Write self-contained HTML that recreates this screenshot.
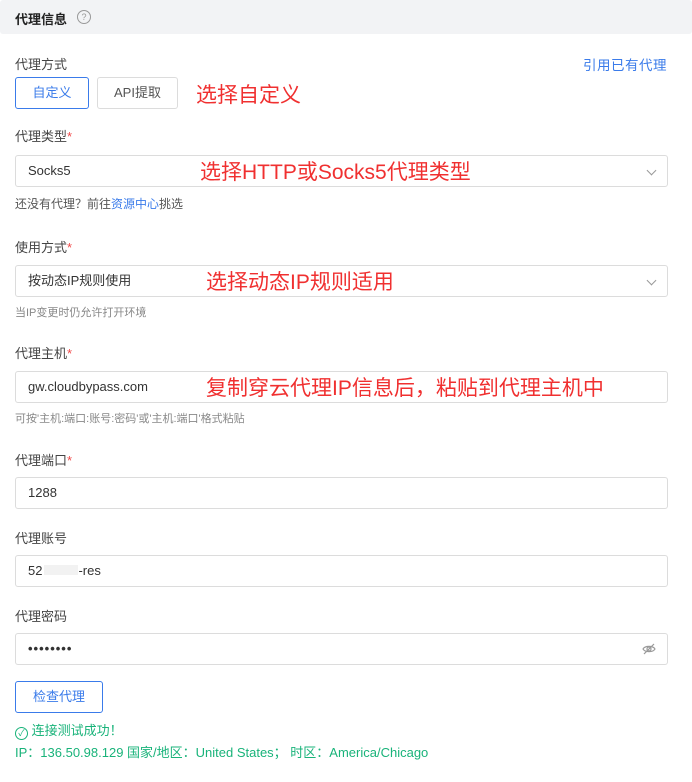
<!DOCTYPE html><html><head><meta charset="utf-8"><style>
body{margin:0;width:692px;height:782px;background:#fff;font-family:"Liberation Sans","Noto Sans CJK SC",sans-serif;position:relative;overflow:hidden;color:#333}
.a{position:absolute;white-space:nowrap}
.hd{position:absolute;left:0;top:0;width:692px;height:34px;background:#f2f3f5;border-radius:3px}
.lb{font-size:13px;color:#444}
.st{color:#f04848}
.in{position:absolute;left:15px;width:651px;height:30px;border:1px solid #dcdcdc;border-radius:3px;font-size:13px;line-height:30px;box-sizing:content-box}
.in span{margin-left:12px;color:#333}
.hint{font-size:11px;color:#888}
.red{color:#f03030;font-size:21px}
.arr{position:absolute;right:12px;top:11px;width:6px;height:6px;border-right:1px solid #999;border-bottom:1px solid #999;transform:rotate(45deg)}
</style></head><body>
<div class="hd"></div>
<div class="a" style="left:15px;top:9px;font-size:13px;font-weight:bold;color:#222">代理信息</div>
<div class="a" style="left:77px;top:10px;width:12px;height:12px;border:1px solid #999;border-radius:50%;font-size:9px;line-height:12px;text-align:center;color:#999">?</div>
<div class="a lb" style="left:15px;top:54px">代理方式</div>
<div class="a" style="left:583px;top:54px;font-size:13.5px;color:#3a7bea;letter-spacing:0.5px">引用已有代理</div>
<div class="a" style="left:15px;top:77px;width:72px;height:30px;border:1px solid #3a7bea;border-radius:3px;color:#3a7bea;font-size:13px;line-height:30px;text-align:center">自定义</div>
<div class="a" style="left:97px;top:77px;width:79px;height:30px;border:1px solid #dcdcdc;border-radius:3px;color:#555;font-size:13px;line-height:30px;text-align:center">API提取</div>
<div class="a red" style="left:196px;top:79px">选择自定义</div>
<div class="a lb" style="left:15px;top:126px">代理类型<span class="st">*</span></div>
<div class="in" style="top:155px"><span>Socks5</span><i class="arr"></i></div>
<div class="a red" style="left:200px;top:156px">选择HTTP或Socks5代理类型</div>
<div class="a" style="left:15px;top:195px;font-size:12px;color:#555">还没有代理？前往<span style="color:#3a7bea">资源中心</span>挑选</div>
<div class="a lb" style="left:15px;top:237px">使用方式<span class="st">*</span></div>
<div class="in" style="top:265px"><span>按动态IP规则使用</span><i class="arr"></i></div>
<div class="a red" style="left:206px;top:266px">选择动态IP规则适用</div>
<div class="a hint" style="left:15px;top:304px">当IP变更时仍允许打开环境</div>
<div class="a lb" style="left:15px;top:343px">代理主机<span class="st">*</span></div>
<div class="in" style="top:371px"><span>gw.cloudbypass.com</span></div>
<div class="a red" style="left:206px;top:372px">复制穿云代理IP信息后，粘贴到代理主机中</div>
<div class="a hint" style="left:15px;top:410px">可按'主机:端口:账号:密码'或'主机:端口'格式粘贴</div>
<div class="a lb" style="left:15px;top:450px">代理端口<span class="st">*</span></div>
<div class="in" style="top:477px"><span>1288</span></div>
<div class="a lb" style="left:15px;top:528px">代理账号</div>
<div class="in" style="top:555px"><span>52<span style="margin:0 0 0 2px;display:inline-block;width:34px;height:10px;background:#f2f2f2"></span>-res</span></div>
<div class="a lb" style="left:15px;top:606px">代理密码</div>
<div class="in" style="top:633px"><span style="letter-spacing:1px;font-weight:bold">••••••••</span>
<svg style="position:absolute;right:11px;top:8px" width="14" height="14" viewBox="0 0 14 14" fill="none" stroke="#999" stroke-width="1.2"><path d="M1 7C3 3.5 11 3.5 13 7C11 10.5 3 10.5 1 7Z"/><circle cx="7" cy="7" r="2"/><path d="M2 12L12 2"/></svg></div>
<div class="a" style="left:15px;top:681px;width:86px;height:30px;border:1px solid #3a7bea;border-radius:3px;color:#3a7bea;font-size:13px;line-height:30px;text-align:center">检查代理</div>
<div class="a" style="left:15px;top:720px;font-size:13px;color:#19b37a"><span style="display:inline-block;width:11px;height:11px;border:1px solid #19b37a;border-radius:50%;font-size:9px;line-height:11px;text-align:center;vertical-align:-1px">✓</span> 连接测试成功！</div>
<div class="a" style="left:15px;top:742px;font-size:13px;color:#19b37a">IP：136.50.98.129 国家/地区：United States； 时区：America/Chicago</div>
</body></html>
